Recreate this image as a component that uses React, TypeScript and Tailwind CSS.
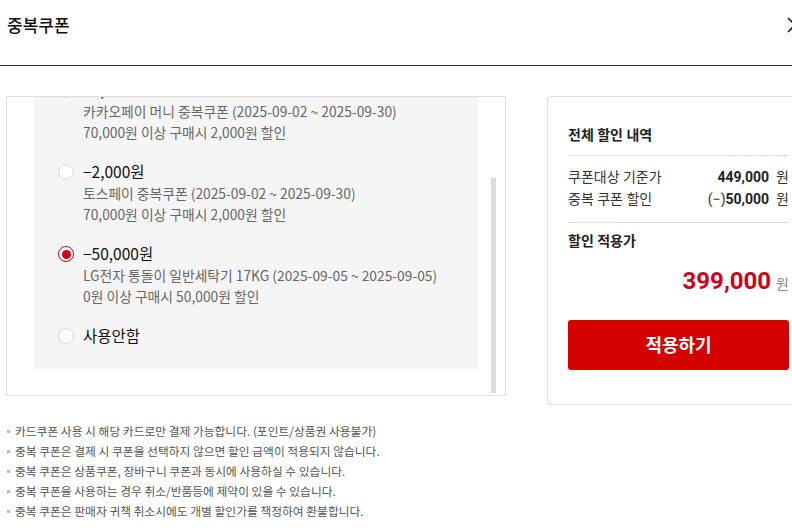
import React from "react";

type Coupon = {
    price: string;
    title?: string;
    cond?: string;
    checked?: boolean;
};

const COUPONS: Coupon[] = [
    { price: "−2,000원", title: "카카오페이 머니 중복쿠폰 (2025-09-02 ~ 2025-09-30)", cond: "70,000원 이상 구매시 2,000원 할인" },
    { price: "−2,000원", title: "토스페이 중복쿠폰 (2025-09-02 ~ 2025-09-30)", cond: "70,000원 이상 구매시 2,000원 할인" },
    { price: "−50,000원", title: "LG전자 통돌이 일반세탁기 17KG (2025-09-05 ~ 2025-09-05)", cond: "0원 이상 구매시 50,000원 할인", checked: true },
    { price: "사용안함" },
];

const NOTES = [
    "카드쿠폰 사용 시 해당 카드로만 결제 가능합니다. (포인트/상품권 사용불가)",
    "중복 쿠폰은 결제 시 쿠폰을 선택하지 않으면 할인 금액이 적용되지 않습니다.",
    "중복 쿠폰은 상품쿠폰, 장바구니 쿠폰과 동시에 사용하실 수 있습니다.",
    "중복 쿠폰을 사용하는 경우 취소/반품등에 제약이 있을 수 있습니다.",
    "중복 쿠폰은 판매자 귀책 취소시에도 개별 할인가를 책정하여 환불합니다.",
];

function Radio({ checked }: { checked?: boolean }) {
    if (checked) {
        return (
            <span className="w-4 h-4 rounded-full border border-[#d0021b] bg-white flex items-center justify-center shrink-0">
                <span className="w-[9px] h-[9px] rounded-full bg-[#d0021b]" />
            </span>
        );
    }
    return <span className="w-4 h-4 rounded-full border border-[#dadada] bg-white shrink-0" />;
}

export default function App() {
    return (
        <div
            className="w-[792px] h-[532px] overflow-hidden bg-white relative text-[#222]"
            style={{ fontFamily: '"Noto Sans CJK KR", "Noto Sans", sans-serif' }}
        >
            {/* header */}
            <div className="h-[66px] border-b border-[#333] px-[7px] pt-[14px]">
                <h1 className="text-[17px] leading-[22px] font-medium text-[#111]">중복쿠폰</h1>
            </div>
            <svg className="absolute left-[786px] top-[17px]" width="18" height="16" viewBox="0 0 18 16">
                <path d="M2 1 L16 15 M16 1 L2 15" stroke="#222" strokeWidth="1.6" />
            </svg>

            <div className="flex pl-[6px] pt-[30px] gap-[41px]">
                {/* coupon list */}
                <div className="w-[500px] h-[300px] shrink-0 border border-[#ddd] relative overflow-hidden">
                    <div className="px-[27px] mt-[-42px]">
                        <div className="bg-[#f5f5f5] pl-[24px] pt-[24px] pb-[22px] flex flex-col gap-[18px]">
                            {COUPONS.map((c, i) => (
                                <div key={i} className="flex flex-col">
                                    <div className="flex items-center gap-[9px] h-[22px]">
                                        <Radio checked={c.checked} />
                                        <span className="text-[15.5px] text-[#111]">{c.price}</span>
                                    </div>
                                    {c.title && (
                                        <div className="pl-[25px] text-[13.8px] leading-[21px] text-[#666]">
                                            <div>{c.title}</div>
                                            <div>{c.cond}</div>
                                        </div>
                                    )}
                                </div>
                            ))}
                        </div>
                    </div>
                    <div className="absolute left-[484px] top-[81px] w-[5px] h-[215px] bg-[#dcdcdc]" />
                </div>

                {/* summary */}
                <div
                    className="w-[263px] shrink-0 h-[309px] border border-[#ddd] rounded-[3px] px-[20px] pt-[28px]"
                    style={{ fontFamily: 'Roboto, "Noto Sans CJK KR", sans-serif' }}
                >
                    <div className="text-[14px] leading-5 font-bold text-[#222] pb-[10px] border-b border-[#ddd]">전체 할인 내역</div>
                    <div className="pt-[10px] pb-[12px] border-b border-[#ddd] text-[14px]">
                        <div className="flex justify-between h-[22px] items-center">
                            <span className="text-[#333]">쿠폰대상 기준가</span>
                            <span className="flex items-center gap-[7px]">
                                <span className="font-bold text-[#222]">449,000</span>
                                <span className="text-[#333]">원</span>
                            </span>
                        </div>
                        <div className="flex justify-between h-[22px] items-center">
                            <span className="text-[#333]">중복 쿠폰 할인</span>
                            <span className="flex items-center gap-[7px]">
                                <span>
                                    <span className="text-[#333] font-normal">(−)</span>
                                    <span className="font-bold text-[#222]">50,000</span>
                                </span>
                                <span className="text-[#333]">원</span>
                            </span>
                        </div>
                    </div>
                    <div className="pt-[8px] text-[14px] leading-5 font-bold text-[#222]">할인 적용가</div>
                    <div className="mt-[15px] h-[30px] flex items-baseline justify-end gap-[5px]">
                        <span className="text-[24px] font-bold text-[#d0021b] leading-[30px]">399,000</span>
                        <span className="text-[14px] text-[#888]">원</span>
                    </div>
                    <button className="mt-[24px] w-full h-[50px] rounded-[3px] bg-[#d50000] text-white text-[18px] font-bold">
                        적용하기
                    </button>
                </div>
            </div>

            {/* notes */}
            <ul className="mt-[16px] pl-[7px] text-[11.75px] leading-5 text-[#555]">
                {NOTES.map((n) => (
                    <li key={n} className="flex items-center gap-[5px]">
                        <span className="w-[3px] h-[3px] bg-[#bbb] shrink-0" />
                        <span>{n}</span>
                    </li>
                ))}
            </ul>
        </div>
    );
}
